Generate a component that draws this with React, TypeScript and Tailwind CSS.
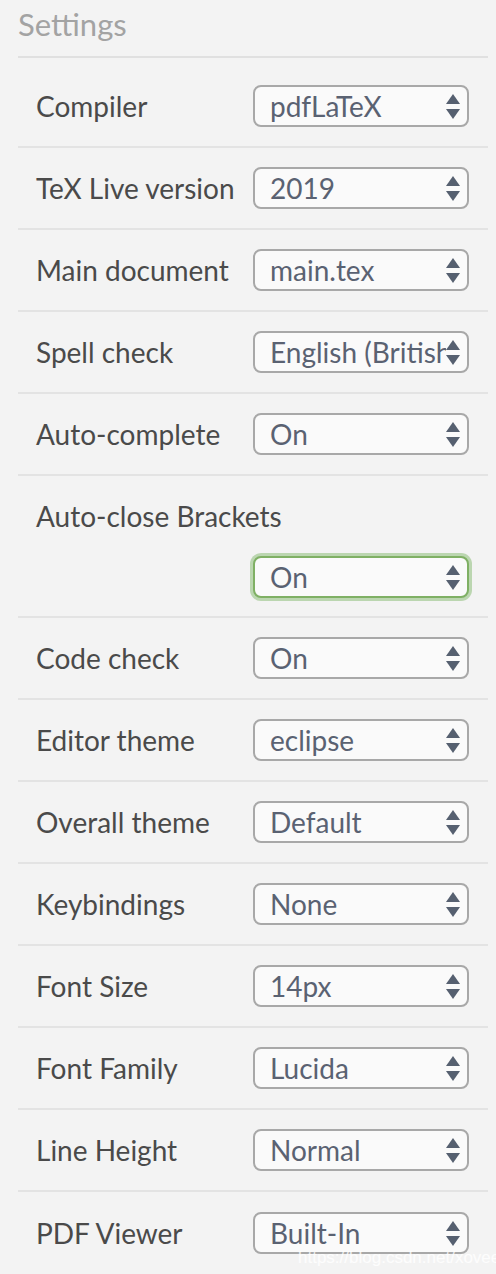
import React from "react";

type Row = { label: string; value: string; stacked?: boolean; focused?: boolean };

const rows: Row[] = [
  { label: "Compiler", value: "pdfLaTeX" },
  { label: "TeX Live version", value: "2019" },
  { label: "Main document", value: "main.tex" },
  { label: "Spell check", value: "English (British)" },
  { label: "Auto-complete", value: "On" },
  { label: "Auto-close Brackets", value: "On", stacked: true, focused: true },
  { label: "Code check", value: "On" },
  { label: "Editor theme", value: "eclipse" },
  { label: "Overall theme", value: "Default" },
  { label: "Keybindings", value: "None" },
  { label: "Font Size", value: "14px" },
  { label: "Font Family", value: "Lucida" },
  { label: "Line Height", value: "Normal" },
  { label: "PDF Viewer", value: "Built-In" },
];

function Arrows() {
  return (
    <svg width="14" height="25" viewBox="0 0 14 25" className="shrink-0">
      <polygon points="7,0 14,10 0,10" fill="#566070" />
      <polygon points="0,15 14,15 7,25" fill="#566070" />
    </svg>
  );
}

function Select({ value, focused }: { value: string; focused?: boolean }) {
  return (
    <div
      className={
        focused
          ? "w-[216px] h-[42px] rounded-[8px] border-2 border-[#7fb064] bg-[#fafafa] shadow-[0_0_0_3px_rgba(140,190,120,0.55)] flex items-center pl-[15px] pr-[7px] overflow-hidden"
          : "w-[216px] h-[42px] rounded-[8px] border-2 border-[#a8a8a8] bg-[#fafafa] flex items-center pl-[15px] pr-[7px] overflow-hidden"
      }
    >
      <span className="flex-1 min-w-0 whitespace-nowrap overflow-x-clip text-[28px] leading-[34px] text-[#5a6272]">
        {value}
      </span>
      <Arrows />
    </div>
  );
}

export default function App() {
  return (
    <div
      className="relative w-[496px] h-[1274px] overflow-hidden bg-[#f3f3f3] pl-[18px] pr-[8px]"
      style={{ fontFamily: "Lato, 'Open Sans', sans-serif" }}
    >
      <div className="h-[58px] border-b-2 border-[#e0e0e0] flex items-start">
        <h1 className="text-[31px] leading-none text-[#a3a3a3] pt-[9px]">Settings</h1>
      </div>
      <div className="pt-[8px]">
        {rows.map((r) =>
          r.stacked ? (
            <div key={r.label} className="border-b-2 border-[#e3e3e3] pl-[18px] pr-[19px] pb-[18px] flex flex-col">
              <div className="h-[80px] flex items-center">
                <span className="text-[28px] leading-none text-[#4a4a4a]">{r.label}</span>
              </div>
              <div className="flex justify-end">
                <Select value={r.value} focused={r.focused} />
              </div>
            </div>
          ) : (
            <div
              key={r.label}
              className="h-[82px] border-b-2 border-[#e3e3e3] last:border-b-0 pl-[18px] pr-[19px] flex items-center justify-between"
            >
              <span className="text-[28px] leading-none text-[#4a4a4a] whitespace-nowrap">{r.label}</span>
              <Select value={r.value} focused={r.focused} />
            </div>
          )
        )}
      </div>
      <div
        className="absolute left-[298px] top-[1245px] text-[17px] text-white/80 whitespace-nowrap"
        style={{ fontFamily: "'Liberation Sans', Arial, sans-serif" }}
      >
        https://blog.csdn.net/xovee
      </div>
    </div>
  );
}
